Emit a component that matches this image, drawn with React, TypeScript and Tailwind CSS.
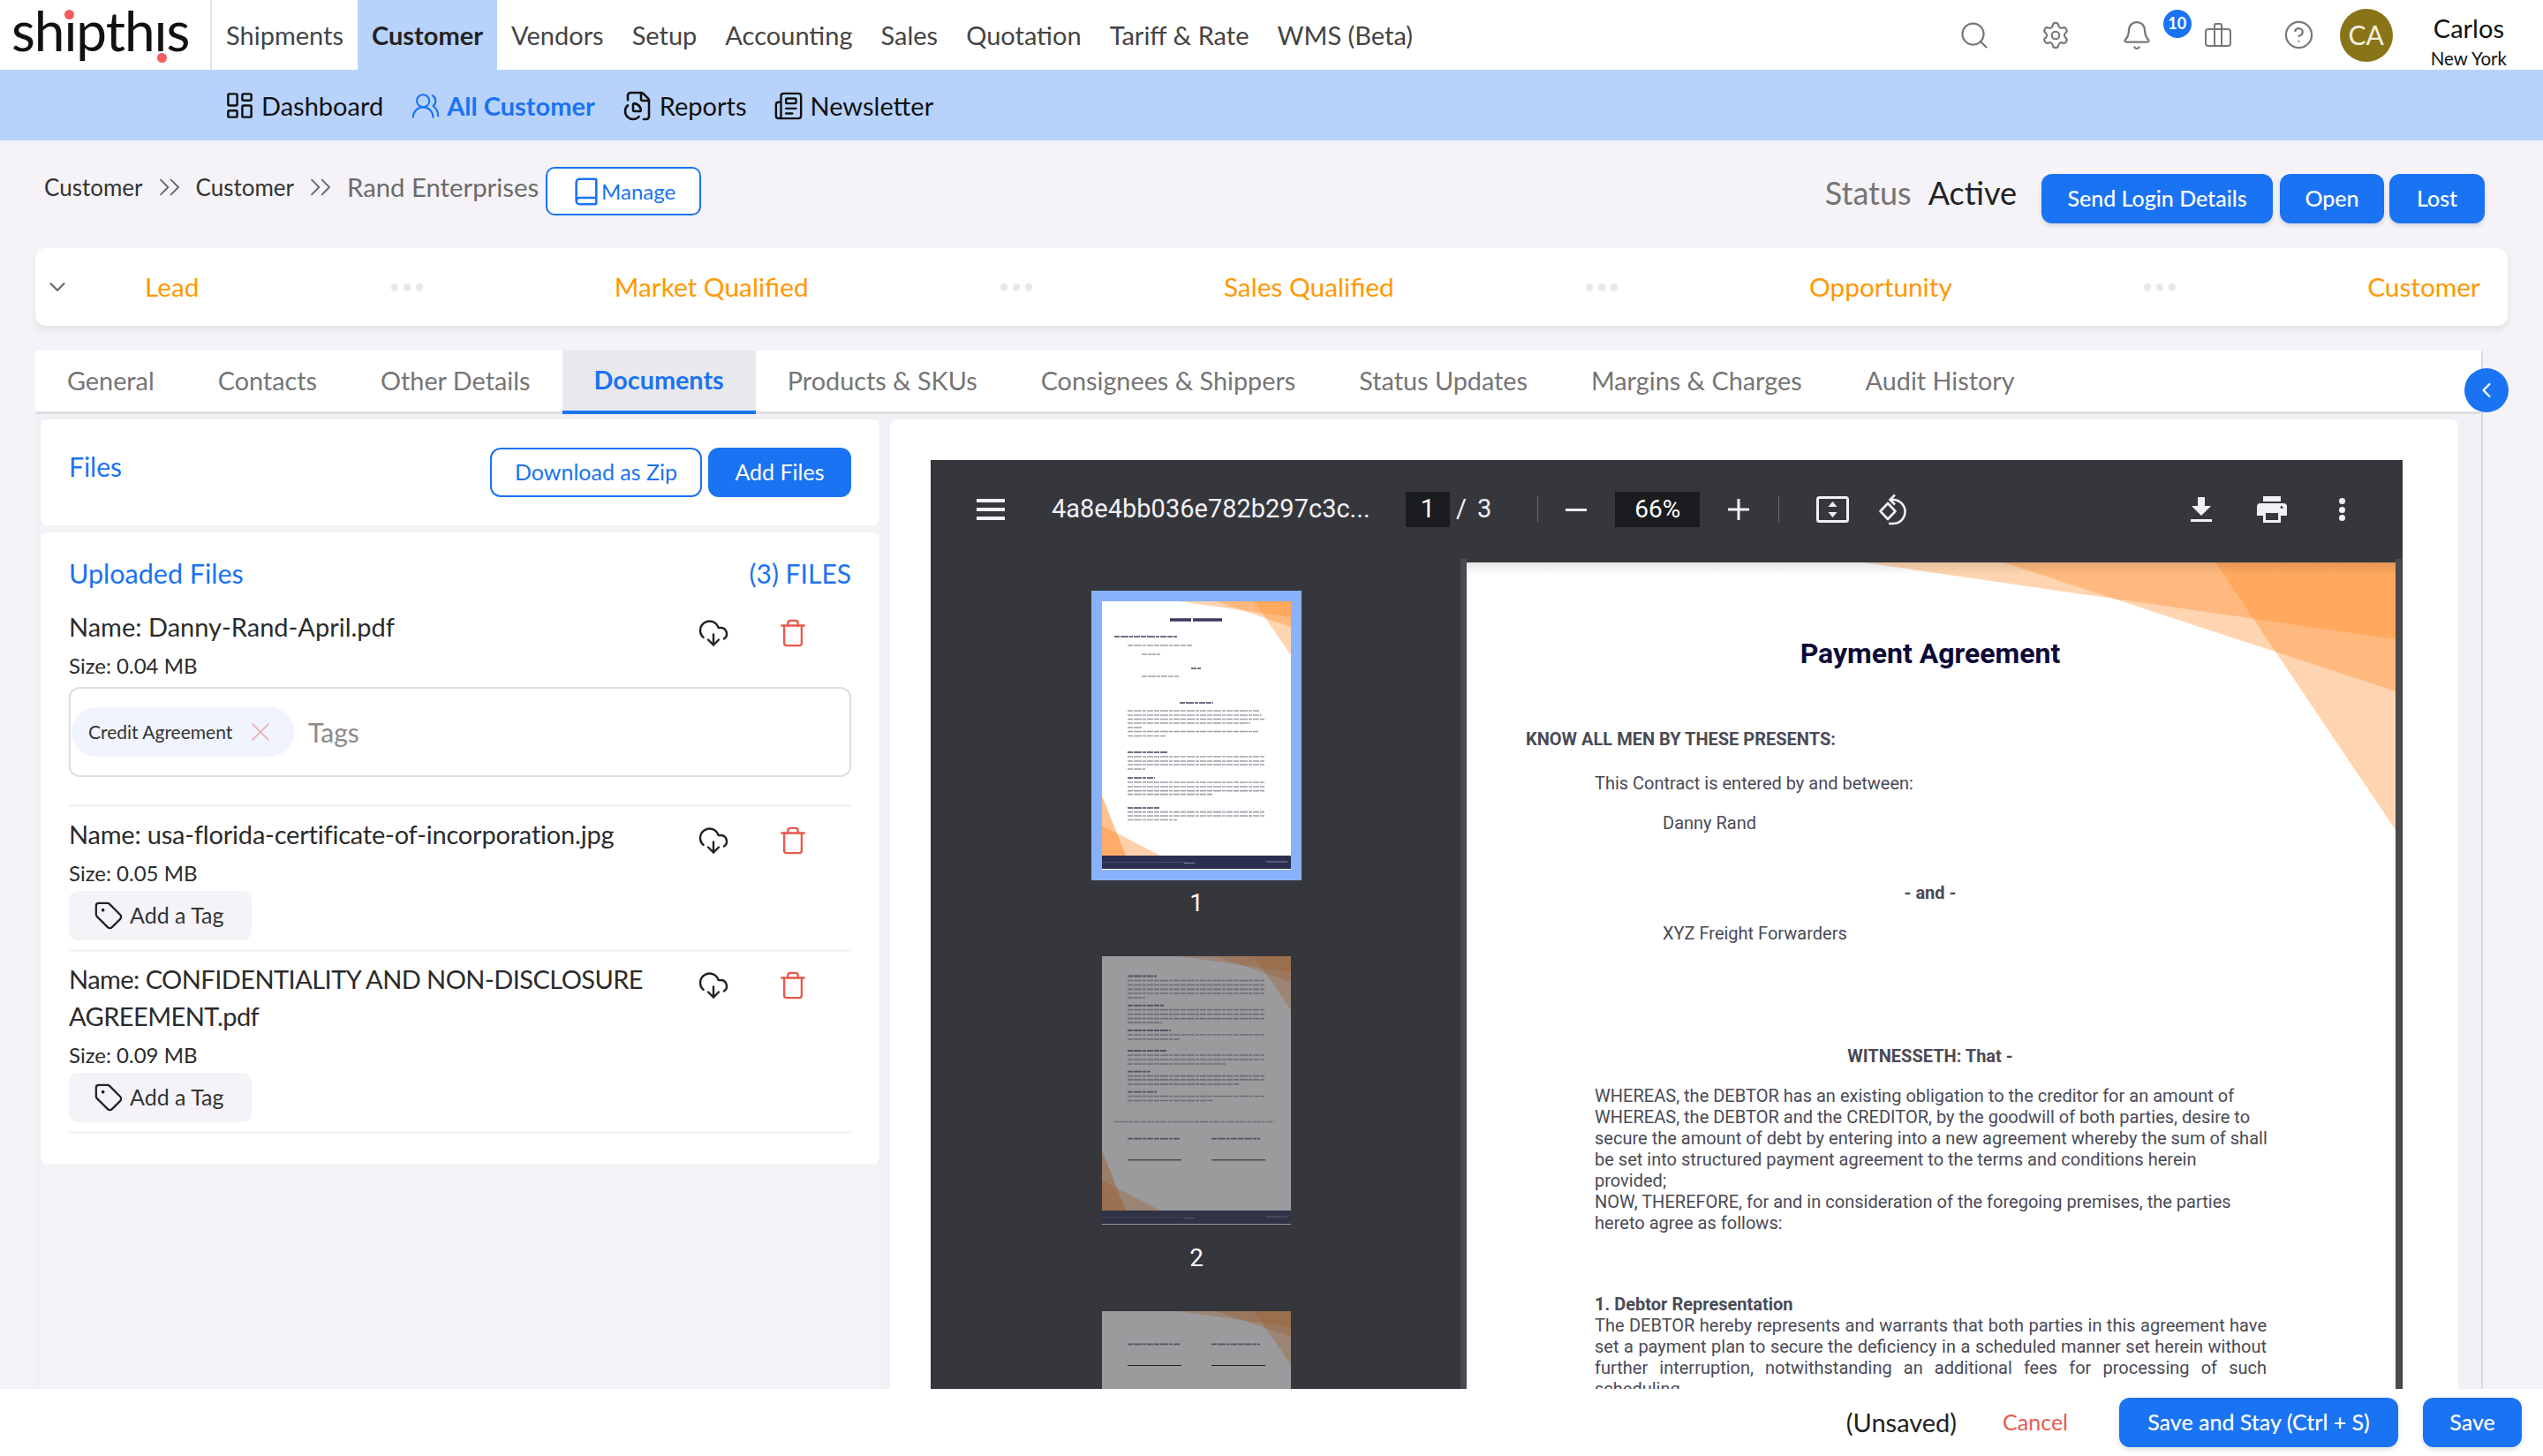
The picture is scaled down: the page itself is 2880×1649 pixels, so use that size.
import React from 'react';
import {
  Bell,
  Book,
  ChevronDown,
  ChevronLeft,
  ChevronsRight,
  CircleHelp,
  CloudDownload,
  FileChartPie,
  LayoutDashboard,
  Newspaper,
  Search,
  Settings,
  Tag,
  Trash,
  UsersRound,
  X,
} from 'lucide-react';

const mainNav = ['Shipments', 'Customer', 'Vendors', 'Setup', 'Accounting', 'Sales', 'Quotation', 'Tariff & Rate', 'WMS (Beta)'];
const stages = ['Lead', 'Market Qualified', 'Sales Qualified', 'Opportunity', 'Customer'];
const tabs = ['General', 'Contacts', 'Other Details', 'Documents', 'Products & SKUs', 'Consignees & Shippers', 'Status Updates', 'Margins & Charges', 'Audit History'];

// thumbnail text lines: [y, x start, x end, heading?]
const thumbLines: Record<number, number[][]> = {
  1: [
    [40, 14, 85, 1], [50, 29, 102, 0], [60, 45, 66, 0], [76, 101, 112, 1], [85, 45, 87, 0], [115, 88, 126, 1],
    [124, 29, 178, 0], [129, 29, 181, 0], [133.5, 29, 184, 0], [138, 29, 168, 0], [143, 29, 45, 0], [147.5, 29, 177, 0], [152.5, 29, 72, 0],
    [171, 29, 74, 1], [176, 29, 184, 0], [181, 29, 184, 0], [185, 29, 184, 0], [190, 29, 49, 0],
    [200, 29, 60, 1], [205, 29, 184, 0], [210, 29, 184, 0], [214.6, 29, 184, 0], [218.6, 29, 125, 0],
    [234, 29, 65, 1], [238.6, 29, 184, 0], [243, 29, 184, 0], [247.5, 29, 85, 0],
  ],
  2: [
    [22.5, 29, 62, 1], [27.5, 29, 184, 0], [32.5, 29, 184, 0], [37.4, 29, 184, 0], [42, 29, 184, 0], [47, 29, 49, 0],
    [55.8, 29, 70, 1], [60.7, 29, 184, 0], [65.7, 29, 184, 0], [70.7, 29, 184, 0], [75.2, 29, 68, 0],
    [84, 29, 78, 1], [89, 29, 184, 0], [94, 29, 88, 0],
    [107, 29, 73, 1], [112, 29, 184, 0], [117, 29, 184, 0], [122, 29, 140, 0],
    [130.6, 29, 55, 1], [135.6, 29, 184, 0], [139.8, 29, 184, 0], [144.8, 29, 155, 0],
    [153.6, 29, 62, 1], [158.5, 29, 184, 0], [163.5, 29, 125, 0],
    [187.5, 14, 195, 0], [206.6, 29, 88, 1], [206.6, 124, 179, 1],
  ],
  3: [[37.4, 29, 88, 1], [37.4, 124, 179, 1]],
};

function Thumb({ page }: { page: number }) {
  const sigY = page === 2 ? 230.3 : page === 3 ? 61 : 0;
  return (
    <svg width="214" height="304" viewBox="0 0 214 304" className={page === 1 ? 'block bg-white' : 'block bg-white opacity-50'}>
      <polygon points="87,0 214,18 214,0" fill="#ff8a2a" opacity="0.37" />
      <polygon points="129,0 214,29 214,0" fill="#ff8a2a" opacity="0.37" />
      <polygon points="172,0 214,61 214,0" fill="#ff8a2a" opacity="0.37" />
      <polygon points="0,220 27,288 0,288" fill="#ff8a2a" opacity="0.5" />
      <polygon points="0,254 66,288 0,288" fill="#ff8a2a" opacity="0.4" />
      {page === 1 && <line x1="77" x2="136" y1="21" y2="21" stroke="#3a3862" strokeWidth="3.4" strokeDasharray="24 2 33" />}
      {thumbLines[page].map(([y, a, b, h]) => (
        <line
          key={`${y}-${a}`}
          x1={a}
          x2={b}
          y1={y}
          y2={y}
          stroke={h ? '#6f6f86' : '#a0a0aa'}
          strokeWidth={h ? 1.9 : 1.7}
          strokeDasharray="6 1 9 1 4 1 7 1"
        />
      ))}
      {sigY > 0 && <rect x="29" y={sigY} width="61" height="1" fill="#111" />}
      {sigY > 0 && <rect x="124" y={sigY} width="61" height="1" fill="#111" />}
      <rect x="0" y="288" width="214" height="15" fill="#2b3050" />
      <rect x="0" y="295" width="95" height="0.6" fill="#565a75" />
      <rect x="93" y="296" width="12" height="0.8" fill="#9fa2b8" />
      <rect x="186" y="294" width="24" height="2" fill="#565a75" />
    </svg>
  );
}

function BriefcaseIcon() {
  return (
    <svg width="30" height="27" viewBox="0 0 30 27" fill="none" stroke="#777" strokeWidth="2">
      <rect x="1" y="7" width="28" height="19" rx="3" />
      <path d="M11 7V2.500A1.500 1.500 0 0 1 12.500 1h5A1.500 1.500 0 0 1 19 2.500V7" />
      <path d="M11 7v19M19 7v19" />
    </svg>
  );
}

function FileRow({ name, size, chip }: { name: React.ReactNode; size: string; chip?: boolean }) {
  return (
    <div className="pt-[10px]">
      <div className="flex items-start">
        <div className="w-[712px]">
          <div className="text-[29px] leading-[42px] text-[#2b2b2b]">{name}</div>
          <div className="mt-[7px] text-[24px] leading-[32px] text-[#2b2b2b]">{size}</div>
        </div>
        <CloudDownload size={36} strokeWidth={1.6} className="mt-[10px] shrink-0 text-[#222]" />
        <Trash size={34} strokeWidth={1.7} className="ml-[55px] mt-[11px] shrink-0 text-[#e8594f]" />
      </div>
      {chip ? (
        <div className="mb-[31px] mt-[8px] flex h-[102px] items-center rounded-xl border-2 border-[#dedede] pl-[1px]">
          <div className="flex h-[56px] w-[252px] items-center rounded-full bg-[#eff4fe] pl-[19px] text-[21px] text-[#333]">
            Credit Agreement
            <X size={36} strokeWidth={1} className="ml-[14px] text-[#f0a3a3]" />
          </div>
          <span className="ml-[16px] text-[30px] text-[#8a8a8a]">Tags</span>
        </div>
      ) : (
        <div className="mb-[10px] mt-[4px] flex h-[56px] w-[207px] items-center rounded-[10px] bg-[#f5f3f7] pl-[28px] text-[25px] text-[#333]">
          <Tag size={34} strokeWidth={1.6} className="text-[#222]" />
          <span className="ml-[7px]">Add a Tag</span>
        </div>
      )}
      <div className="h-[3px] bg-[#f3f2f5]" />
    </div>
  );
}

export default function App() {
  return (
    <div className="flex h-[1649px] w-[2880px] flex-col overflow-hidden bg-[#f5f3f7] font-['Lato',sans-serif]">
      {/* Top nav */}
      <div className="flex h-[79px] shrink-0 items-stretch bg-white">
        <div className="relative w-[240px] shrink-0 border-r-2 border-[#e3e3e3] pl-[13px] text-[62px] leading-[68px] text-[#111]">
          <span className="tracking-[-1px]">shıpthıs</span>
          <span className="absolute left-[73px] top-[11px] h-[11px] w-[11px] rounded-full bg-[#f45b5b]" />
          <span className="absolute left-[178px] top-[60px] h-[11px] w-[11px] rounded-full bg-[#f45b5b]" />
        </div>
        {mainNav.map((item) => (
          <div
            key={item}
            className={
              item === 'Customer'
                ? 'flex items-center bg-[#b8d3fb] px-4 text-[29px] font-bold text-[#222]'
                : 'flex items-center px-4 text-[29px] text-[#444]'
            }
          >
            {item}
          </div>
        ))}
        <div className="ml-auto flex items-center">
          <div className="flex w-[36px] justify-center"><Search size={36} strokeWidth={1.5} className="text-[#777]" /></div>
          <div className="ml-[56px] flex w-[36px] justify-center"><Settings size={34} strokeWidth={1.5} className="text-[#777]" /></div>
          <div className="relative ml-[56px] flex w-[36px] justify-center">
            <Bell size={36} strokeWidth={1.5} className="text-[#777]" />
            <span className="absolute left-[48px] top-[-11px] flex h-[32px] w-[32px] items-center justify-center rounded-full bg-[#1a73f2] text-[18px] font-bold text-white">10</span>
          </div>
          <div className="ml-[56px] flex w-[36px] justify-center"><BriefcaseIcon /></div>
          <div className="ml-[56px] flex w-[36px] justify-center"><CircleHelp size={35} strokeWidth={1.5} className="text-[#777]" /></div>
          <div className="ml-[28px] flex h-[60px] w-[60px] items-center justify-center rounded-full bg-[#8a7418] text-[30px] text-[#f3f0e0]">CA</div>
          <div className="ml-[43px] mr-[41px] mt-[15px] flex flex-col items-center">
            <span className="text-[29px] leading-[36px] text-[#111]">Carlos</span>
            <span className="mt-[2px] text-[20.5px] leading-[28px] text-[#111]">New York</span>
          </div>
        </div>
      </div>

      {/* Sub nav */}
      <div className="flex h-[80px] shrink-0 items-center gap-[31px] bg-[#b8d3fb] pl-[254px] pt-[1px] text-[29px] text-[#111]">
        <div className="flex items-center gap-[7px]"><LayoutDashboard size={35} strokeWidth={1.7} />Dashboard</div>
        <div className="flex items-center gap-[7px] font-bold text-[#1a73f2]"><UsersRound size={34} strokeWidth={1.5} />All Customer</div>
        <div className="flex items-center gap-[6px]"><FileChartPie size={36} strokeWidth={1.7} />Reports</div>
        <div className="flex items-center gap-[7px]"><Newspaper size={34} strokeWidth={1.7} />Newsletter</div>
      </div>

      {/* Breadcrumb and status */}
      <div className="flex h-[122px] shrink-0 items-start justify-between pl-[50px] pr-[66px]">
        <div className="flex items-start pt-[30px]">
          <div className="flex h-[46px] items-center text-[26px] text-[#333]">
            Customer
            <ChevronsRight size={40} strokeWidth={1.1} className="ml-[10px] mr-[10px] text-[#666]" />
            Customer
            <ChevronsRight size={40} strokeWidth={1.1} className="ml-[10px] mr-[10px] text-[#666]" />
            <span className="text-[29.3px] text-[#6b6b6b]">Rand Enterprises</span>
          </div>
          <div className="ml-[8px] flex h-[55px] w-[176px] items-center justify-center rounded-[10px] border-2 border-[#1a73f2] bg-white text-[24px] text-[#1a73f2]">
            <Book size={34} strokeWidth={1.8} />
            Manage
          </div>
        </div>
        <div className="flex items-start pt-[38px]">
          <div className="flex h-[42px] items-center text-[36px]">
            <span className="text-[#757575]">Status</span>
            <span className="ml-[19px] text-[#222]">Active</span>
          </div>
          <div className="ml-[28px] flex h-[56px] w-[262px] items-center justify-center rounded-xl bg-[#1a73f2] text-[25px] font-medium text-white shadow-[0_3px_5px_rgba(0,0,0,0.12)]">Send Login Details</div>
          <div className="ml-[8px] flex h-[56px] w-[118px] items-center justify-center rounded-xl bg-[#1a73f2] text-[25px] font-medium text-white shadow-[0_3px_5px_rgba(0,0,0,0.12)]">Open</div>
          <div className="ml-[6px] flex h-[56px] w-[108px] items-center justify-center rounded-xl bg-[#1a73f2] text-[25px] font-medium text-white shadow-[0_3px_5px_rgba(0,0,0,0.12)]">Lost</div>
        </div>
      </div>

      {/* Stages */}
      <div className="ml-[40px] flex h-[88px] w-[2800px] shrink-0 items-center rounded-xl bg-white pl-[10px] pr-[31px] shadow-[0_5px_9px_rgba(0,0,0,0.07)]">
        <ChevronDown size={30} strokeWidth={1.7} className="text-[#666]" />
        <div className="ml-[84px] flex flex-1 items-center justify-between text-[29.8px] text-[#ff9800]">
          {stages.map((stage, i) => (
            <React.Fragment key={stage}>
              <span>{stage}</span>
              {i < stages.length - 1 && (
                <span className="flex w-[36px] justify-between">
                  <i className="h-[9px] w-[8px] rounded-full bg-[#e8e8e8]" />
                  <i className="h-[9px] w-[8px] rounded-full bg-[#e8e8e8]" />
                  <i className="h-[9px] w-[8px] rounded-full bg-[#e8e8e8]" />
                </span>
              )}
            </React.Fragment>
          ))}
        </div>
      </div>

      {/* Tabs */}
      <div className="relative ml-[40px] mt-[28px] flex h-[72px] w-[2772px] shrink-0 border-b-[3px] border-r-2 border-b-[#e0dee2] border-r-[#dcdae0] bg-white text-[28.8px] text-[#757575]">
        {tabs.map((tab) => (
          <div
            key={tab}
            className={
              tab === 'Documents'
                ? 'mb-[-3px] flex items-center border-b-4 border-[#1a73f2] bg-[#e9e8ec] px-9 font-bold text-[#1a73f2]'
                : 'flex items-center px-9'
            }
          >
            {tab}
          </div>
        ))}
        <div className="absolute right-[-31px] top-[20px] flex h-[50px] w-[50px] items-center justify-center rounded-full bg-[#1a73f2] text-white">
          <ChevronLeft size={28} strokeWidth={2} />
        </div>
      </div>

      {/* Content */}
      <div className="ml-[40px] flex min-h-0 w-[2772px] flex-1 overflow-hidden border-r-2 border-[#dcdae0] bg-[#f2f0f5] pl-[6px] pt-[6px]">
        <div className="flex w-[950px] shrink-0 flex-col gap-[8px] bg-[#f5f3f7]">
          <div className="flex h-[120px] items-start justify-between rounded-lg bg-white pl-[32px] pr-[32px] pt-[31px] shadow-[0_0_3px_rgba(0,0,0,0.05)]">
            <span className="text-[30px] leading-[44px] text-[#1a73f2]">Files</span>
            <div className="mt-[1px] flex gap-[7px] text-[25px]">
              <div className="flex h-[56px] w-[240px] items-center justify-center rounded-xl border-2 border-[#1a73f2] text-[#1a73f2]">Download as Zip</div>
              <div className="flex h-[56px] w-[162px] items-center justify-center rounded-xl bg-[#1a73f2] text-white">Add Files</div>
            </div>
          </div>
          <div className="h-[716px] rounded-lg bg-white px-[32px] pt-[26px] shadow-[0_0_3px_rgba(0,0,0,0.05)]">
            <div className="mb-[10px] flex justify-between text-[30.5px] leading-[40px] text-[#1a73f2]">
              <span>Uploaded Files</span>
              <span className="text-[30px]">(3) FILES</span>
            </div>
            <FileRow name="Name: Danny-Rand-April.pdf" size="Size: 0.04 MB" chip />
            <FileRow name={<span className="tracking-[-0.2px]">Name: usa-florida-certificate-of-incorporation.jpg</span>} size="Size: 0.05 MB" />
            <FileRow name={<span className="tracking-[-0.55px]">Name: CONFIDENTIALITY AND NON-DISCLOSURE<br />AGREEMENT.pdf</span>} size="Size: 0.09 MB" />
          </div>
        </div>

        {/* PDF viewer */}
        <div className="ml-[12px] w-[1776px] shrink-0 rounded-t-lg bg-white pl-[46px] pt-[46px] font-['Roboto',sans-serif]">
          <div className="flex h-full w-[1667px] flex-col overflow-hidden bg-[#36373c]">
            <div className="flex h-[112px] shrink-0 items-center text-[29px] text-[#f1f1f5]">
              <div className="ml-[52px] flex h-[24px] w-[32px] flex-col justify-between">
                <i className="h-[4px] bg-[#f1f1f5]" />
                <i className="h-[4px] bg-[#f1f1f5]" />
                <i className="h-[4px] bg-[#f1f1f5]" />
              </div>
              <span className="ml-[53px] w-[401px]">4a8e4bb036e782b297c3c...</span>
              <span className="flex h-[40px] w-[50px] items-center justify-center bg-[#1b1c1f] text-white">1</span>
              <span className="ml-[7px]">/</span>
              <span className="ml-[12px]">3</span>
              <i className="ml-[52px] h-[30px] w-[1px] bg-[#6a6b70]" />
              <i className="ml-[31px] h-[3px] w-[24px] bg-[#f1f1f5]" />
              <span className="ml-[32px] flex h-[40px] w-[96px] items-center justify-center bg-[#1b1c1f] text-[28px] text-white">66%</span>
              <svg className="ml-[32px]" width="24" height="24" viewBox="0 0 24 24" fill="#f1f1f5"><path d="M10.500 0h3v10.500H24v3H13.500V24h-3V13.500H0v-3h10.500z" /></svg>
              <i className="ml-[33px] h-[30px] w-[1px] bg-[#6a6b70]" />
              <svg className="ml-[42px]" width="37" height="30" viewBox="0 0 37 30" fill="none">
                <rect x="1.500" y="1.500" width="34" height="27" rx="2" stroke="#f1f1f5" strokeWidth="3" />
                <path d="M18.500 6l5 6h-10zM18.500 24l-5-6h10z" fill="#f1f1f5" />
              </svg>
              <svg className="ml-[32px]" width="36" height="36" viewBox="0 0 36 36" fill="none" stroke="#f1f1f5" strokeWidth="2.600">
                <path d="M12 11l8.500 9L12 29l-8.500-9z" strokeLinejoin="round" />
                <path d="M15 7h3a13.500 13.500 0 0 1 0 27h-5" />
                <path d="M20 1.500L14.500 7l5.500 5.500" />
              </svg>
              <svg className="ml-auto" width="24" height="28" viewBox="0 0 24 28" fill="#f1f1f5"><path d="M8 0h8v10h7L12 21 1 10h7zM0 25h24v3H0z" /></svg>
              <svg className="ml-[51px]" width="34" height="30" viewBox="0 0 34 30" fill="#f1f1f5">
                <path d="M7 0h20v6H7z" />
                <path fillRule="evenodd" d="M4 8h26a4 4 0 0 1 4 4v10h-7v8H7v-8H0V12a4 4 0 0 1 4-4zM10 19v8h14v-8zM28 11a1.500 1.500 0 1 0 0 3 1.500 1.500 0 0 0 0-3z" />
              </svg>
              <div className="ml-[59px] mr-[65px] flex h-[26px] w-[7px] flex-col justify-between">
                <i className="h-[7px] rounded-full bg-[#f1f1f5]" />
                <i className="h-[7px] rounded-full bg-[#f1f1f5]" />
                <i className="h-[7px] rounded-full bg-[#f1f1f5]" />
              </div>
            </div>
            <div className="flex min-h-0 flex-1">
              {/* Thumbnails */}
              <div className="w-[600px] shrink-0 overflow-hidden pl-[2px] pt-[36px]">
                {[1, 2, 3].map((page) => (
                  <div key={page} className="flex h-[402px] flex-col items-center">
                    <div className={page === 1 ? 'bg-[#88b2fb] p-[12px]' : 'p-[12px]'}>
                      <Thumb page={page} />
                    </div>
                    <span className="mt-[8px] text-[28px] leading-[36px] text-white">{page}</span>
                  </div>
                ))}
              </div>
              <div className="w-[7px] shrink-0 bg-[#4a4a50]" />
              {/* Page */}
              <div className="mt-[4px] w-[1052px] shrink-0 overflow-hidden">
                <div className="relative h-[1400px] bg-white pl-[67px] pt-[84px] text-[20px] leading-[24px] text-[#4a4a55]">
                  <svg className="absolute left-0 top-0" width="1052" height="310" viewBox="0 0 1052 310">
                    <polygon points="449,0 1052,87 1052,0" fill="#ff8a2a" opacity="0.37" />
                    <polygon points="608,0 1052,146 1052,0" fill="#ff8a2a" opacity="0.37" />
                    <polygon points="848,0 1052,303 1052,0" fill="#ff8a2a" opacity="0.37" />
                  </svg>
                  <div className="absolute left-0 top-0 h-[14px] w-full bg-gradient-to-b from-black/10 to-transparent" />
                  <div className="relative w-[916px] text-center text-[32px] font-bold leading-[38px] text-[#0d0a36]">Payment Agreement</div>
                  <div className="relative mt-[66px] font-bold">KNOW ALL MEN BY THESE PRESENTS:</div>
                  <div className="relative ml-[78px] mt-[26px]">This Contract is entered by and between:</div>
                  <div className="relative ml-[155px] mt-[21px]">Danny Rand</div>
                  <div className="w-[916px] pt-[55px] text-center font-bold">- and -</div>
                  <div className="ml-[155px] mt-[22px]">XYZ Freight Forwarders</div>
                  <div className="mt-[115px] w-[916px] text-center font-bold">WITNESSETH: That -</div>
                  <div className="ml-[78px] mt-[21px] w-[765px] text-[20.05px]">
                    WHEREAS, the DEBTOR has an existing obligation to the creditor for an amount of<br />
                    WHEREAS, the DEBTOR and the CREDITOR, by the goodwill of both parties, desire to<br />
                    secure the amount of debt by entering into a new agreement whereby the sum of shall<br />
                    be set into structured payment agreement to the terms and conditions herein<br />
                    provided;<br />
                    NOW, THEREFORE, for and in consideration of the foregoing premises, the parties<br />
                    hereto agree as follows:
                  </div>
                  <div className="ml-[78px] mt-[68px] font-bold">1. Debtor Representation</div>
                  <div className="ml-[78px] w-[761px] text-justify">
                    The DEBTOR hereby represents and warrants that both parties in this agreement have set a payment plan to secure the deficiency in a scheduled manner set herein without further interruption, notwithstanding an additional fees for processing of such scheduling
                  </div>
                </div>
              </div>
              <div className="w-[7px] shrink-0 bg-[#4a4a50]" />
            </div>
          </div>
        </div>
      </div>

      {/* Footer */}
      <div className="flex h-[76px] shrink-0 items-center justify-end bg-white pr-[24px]">
        <span className="text-[29px] text-[#222]">(Unsaved)</span>
        <span className="ml-[52px] text-[25px] text-[#e8594f]">Cancel</span>
        <div className="ml-[58px] flex h-[56px] w-[316px] items-center justify-center rounded-xl bg-[#1a73f2] text-[25px] font-medium text-white shadow-[0_3px_5px_rgba(0,0,0,0.12)]">Save and Stay (Ctrl + S)</div>
        <div className="ml-[28px] flex h-[56px] w-[112px] items-center justify-center rounded-xl bg-[#1a73f2] text-[25px] font-medium text-white shadow-[0_3px_5px_rgba(0,0,0,0.12)]">Save</div>
      </div>
    </div>
  );
}
